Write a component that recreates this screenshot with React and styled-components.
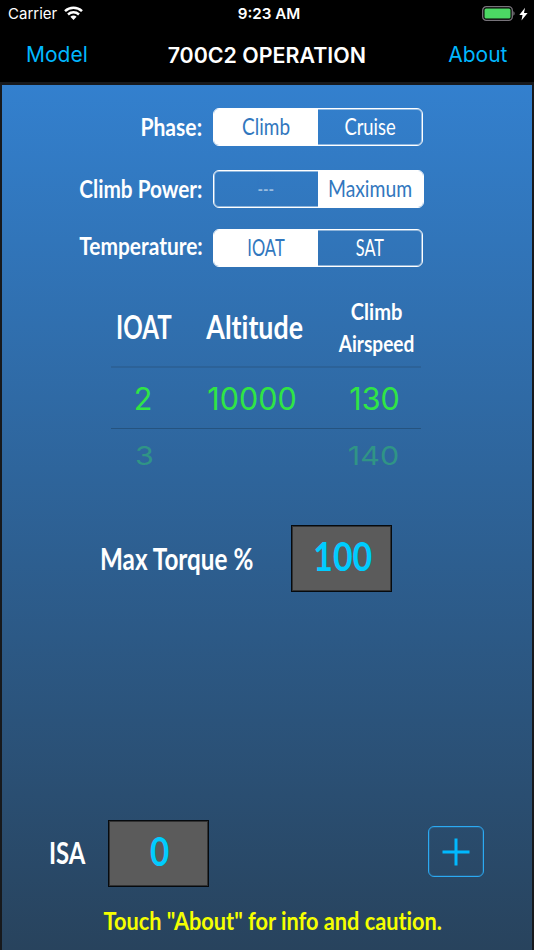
import React, { useState } from 'react';
import styled, { createGlobalStyle } from 'styled-components';

const GlobalStyle = createGlobalStyle`
  * { box-sizing: border-box; }
  body { margin: 0; background: #000; }
  button { background: none; border: 0; padding: 0; margin: 0; cursor: pointer; }
`;

const Screen = styled.div`
  width: 534px;
  height: 950px;
  overflow: hidden;
  display: flex;
  flex-direction: column;
  background: #000;
  color: #fff;
  font-family: Lato, 'Open Sans', sans-serif;
  font-variant-ligatures: none;
  white-space: nowrap;
`;

const StatusBar = styled.header`
  height: 28px;
  padding: 0 6px 0 8px;
  display: grid;
  grid-template-columns: 1fr auto 1fr;
  align-items: center;
  font: 400 15px/28px Inter, sans-serif;
`;

const Carrier = styled.div`
  display: flex;
  align-items: center;
  gap: 7px;
  svg { margin-bottom: 1px; }
`;

const Clock = styled.div`
  padding-left: 2px;
  font-size: 15.2px;
  font-weight: 600;
`;

const Power = styled.div`
  display: flex;
  justify-content: flex-end;
  align-items: center;
  gap: 4px;
  padding-bottom: 1px;
`;

const NavBar = styled.nav`
  height: 54px;
  padding: 0 26.5px 0 26px;
  display: grid;
  grid-template-columns: 1fr auto 1fr;
  align-items: center;
  font-family: Inter, sans-serif;
`;

const NavButton = styled.button`
  justify-self: ${(p) => p.$side};
  color: #00b7ff;
  font: 400 21px/54px Inter, sans-serif;
`;

const Title = styled.h1`
  margin: 0;
  font-size: 21.4px;
  font-weight: 600;
  line-height: 54px;
`;

const Panel = styled.main`
  flex: 1;
  border: solid #17191c;
  border-width: 3px 2px 0;
  background: linear-gradient(#3380ce, #28435d);
  display: flex;
  flex-direction: column;
`;

/* Narrow lettering: squeezes a word horizontally around its anchor. */
const Narrow = styled.span`
  display: inline-block;
  transform: scaleX(${(p) => p.$x});
  transform-origin: ${(p) => p.$from || 'center'};
`;

const Settings = styled.section`
  padding: 23px 0 0 50.5px;
  display: grid;
  grid-template-columns: 150px auto;
  column-gap: 10.5px;
  grid-template-rows: 62px 59px 38px;
`;

const SettingLabel = styled.div`
  height: 38px;
  text-align: right;
  font-size: 24px;
  font-weight: 700;
  line-height: ${(p) => p.$line || 37}px;
`;

const Segments = styled.div`
  width: ${(p) => p.$width}px;
  height: 38px;
  display: grid;
  grid-template-columns: 104px 1fr;
  border: 1px solid #fff;
  border-radius: 6px;
  box-shadow: inset 0 0 0 1px rgba(255, 255, 255, 0.45);
  overflow: hidden;
`;

const Segment = styled.button`
  display: flex;
  justify-content: center;
  font: 400 23px/34px Lato, sans-serif;
  background: ${(p) => (p.$on ? '#fff' : 'transparent')};
  color: ${(p) => (p.$on ? '#3177be' : '#fff')};
  opacity: ${(p) => (p.$muted ? 0.5 : 1)};
`;

const Picker = styled.section`
  width: 310px;
  margin: 28px 0 0 109px;
  display: grid;
  grid-template-rows: 71px 63px 53px;
`;

const PickerRow = styled.div`
  display: grid;
  grid-template-columns: 66px 150px 94px;
  justify-items: center;
  align-items: center;
`;

const HeaderRow = styled(PickerRow)`
  padding-bottom: 9px;
  font-weight: 700;
`;

const SelectedRow = styled(PickerRow)`
  border-top: 2px solid #2c6298;
  border-bottom: 1px solid #25537f;
  color: #30e545;
  font: 400 30.5px Inter, sans-serif;
`;

const NextRow = styled(PickerRow)`
  color: #309486;
  font: 400 30.5px Inter, sans-serif;
  transform: scaleY(0.86);
`;

const Heading = styled.div`
  font-size: 32px;
  line-height: 60px;
  padding-left: ${(p) => p.$indent || 0}px;
`;

const StackedHeading = styled.div`
  display: flex;
  flex-direction: column;
  align-items: center;
  padding: 1px 0 0 6px;
  font-size: 23px;
  line-height: 31.5px;
`;

const Value = styled.div`
  padding-left: ${(p) => p.$left || 0}px;
  padding-right: ${(p) => p.$right || 0}px;
`;

const TorqueRow = styled.section`
  margin-top: 43px;
  padding-left: 98px;
  display: flex;
  align-items: center;
  height: 67px;
`;

const ReadoutLabel = styled.div`
  width: ${(p) => p.$width}px;
  font-size: ${(p) => p.$size}px;
  font-weight: 700;
  padding-bottom: 2px;
`;

const Readout = styled.output`
  width: 101px;
  height: 67px;
  border: 1px solid #060a0e;
  box-shadow: inset 0 0 0 1px rgba(0, 0, 0, 0.45);
  background: #5b5b5b;
  color: #00ccff;
  font-size: 40px;
  font-weight: 700;
  line-height: 60px;
  text-align: center;
  padding-left: ${(p) => p.$nudge || 0}px;
`;

const IsaRow = styled.section`
  margin-top: auto;
  padding: 0 48px 0 47px;
  display: flex;
  align-items: center;
  height: 67px;
`;

const AddButton = styled.button`
  margin-left: auto;
  width: 56px;
  height: 51px;
  margin-bottom: 4px;
  border: 1px solid #2baaf3;
  box-shadow: inset 0 0 0 1px rgba(43, 170, 243, 0.2);
  border-radius: 6px;
  display: grid;
  place-items: center;
`;

const Notice = styled.p`
  margin: 14px 0 10px;
  padding-left: 12px;
  text-align: center;
  color: #f5ff00;
  font-size: 25px;
  font-weight: 700;
  line-height: 39px;
`;

function WifiIcon() {
  return (
    <svg width="19" height="15" viewBox="0 0 19 15" fill="none" stroke="#fff" strokeWidth="2.5">
      <path d="M1 5.1C5.8.6 13.2.6 18 5.1" />
      <path d="M4 8.5c3.2-2.9 7.8-2.9 11 0" />
      <path d="M6.4 10.7c1.8-1.7 4.4-1.7 6.2 0L9.5 13.9z" fill="#fff" stroke="none" />
    </svg>
  );
}

function BatteryIcon() {
  return (
    <svg width="33" height="15" viewBox="0 0 33 15">
      <rect x="0.7" y="0.7" width="29.6" height="13.6" rx="3.6" fill="none" stroke="#77737a" strokeWidth="1.3" />
      <rect x="2.5" y="2.5" width="26" height="10" rx="1.5" fill="#4cd964" />
      <path d="M31.3 5.3c1.8.7 1.8 3.7 0 4.4z" fill="#77737a" />
    </svg>
  );
}

function BoltIcon() {
  return (
    <svg width="9" height="14" viewBox="0 0 9 14" fill="#fff">
      <path d="M6 .8.3 7.9h3.2L2.5 13.5 8.6 5.9H5z" />
    </svg>
  );
}

function PlusIcon() {
  return (
    <svg width="28" height="28" viewBox="0 0 28 28" stroke="#00b9ff" strokeWidth="3">
      <path d="M14 .5v27M.5 14h27" />
    </svg>
  );
}

const SETTINGS = [
  {
    label: 'Phase:', x: 0.88, width: 210, initial: 0,
    options: [{ text: 'Climb', x: 0.825 }, { text: 'Cruise', x: 0.8 }],
  },
  {
    label: 'Climb Power:', x: 0.864, width: 211, initial: 1,
    options: [{ text: '---', x: 0.65, muted: true }, { text: 'Maximum', x: 0.841 }],
  },
  {
    label: 'Temperature:', x: 0.871, width: 210, initial: 0, line: 34,
    options: [{ text: 'IOAT', x: 0.72 }, { text: 'SAT', x: 0.71 }],
  },
];

function Setting({ label, x, width, initial, line, options }) {
  const [selected, setSelected] = useState(initial);
  return (
    <>
      <SettingLabel $line={line}>
        <Narrow $x={x} $from="right">{label}</Narrow>
      </SettingLabel>
      <Segments $width={width}>
        {options.map((option, i) => (
          <Segment
            key={option.text}
            $on={i === selected}
            $muted={option.muted && i !== selected}
            onClick={() => setSelected(i)}
          >
            <Narrow $x={option.x}>{option.text}</Narrow>
          </Segment>
        ))}
      </Segments>
    </>
  );
}

export default function App() {
  return (
    <Screen>
      <GlobalStyle />
      <StatusBar>
        <Carrier>Carrier <WifiIcon /></Carrier>
        <Clock>9:23 AM</Clock>
        <Power><BatteryIcon /><BoltIcon /></Power>
      </StatusBar>
      <NavBar>
        <NavButton $side="start">Model</NavButton>
        <Title>700C2 OPERATION</Title>
        <NavButton $side="end">About</NavButton>
      </NavBar>
      <Panel>
        <Settings>
          {SETTINGS.map((setting) => <Setting key={setting.label} {...setting} />)}
        </Settings>
        <Picker>
          <HeaderRow>
            <Heading><Narrow $x={0.754}>IOAT</Narrow></Heading>
            <Heading $indent={5}><Narrow $x={0.838}>Altitude</Narrow></Heading>
            <StackedHeading>
              <Narrow $x={0.872}>Climb</Narrow>
              <Narrow $x={0.83}>Airspeed</Narrow>
            </StackedHeading>
          </HeaderRow>
          <SelectedRow>
            <Value $right={2}>2</Value>
            <Value>10000</Value>
            <Value $left={1}>130</Value>
          </SelectedRow>
          <NextRow>
            <Value $left={1}>3</Value>
            <Value />
            <Value $right={1}>140</Value>
          </NextRow>
        </Picker>
        <TorqueRow>
          <ReadoutLabel $width={191} $size={30}>
            <Narrow $x={0.809} $from="left">Max Torque %</Narrow>
          </ReadoutLabel>
          <Readout $nudge={2}><Narrow $x={0.846}>100</Narrow></Readout>
        </TorqueRow>
        <IsaRow>
          <ReadoutLabel $width={59} $size={29.5}>
            <Narrow $x={0.81} $from="left">ISA</Narrow>
          </ReadoutLabel>
          <Readout $nudge={2}><Narrow $x={0.83}>0</Narrow></Readout>
          <AddButton aria-label="Add"><PlusIcon /></AddButton>
        </IsaRow>
        <Notice><Narrow $x={0.869}>Touch "About" for info and caution.</Narrow></Notice>
      </Panel>
    </Screen>
  );
}
